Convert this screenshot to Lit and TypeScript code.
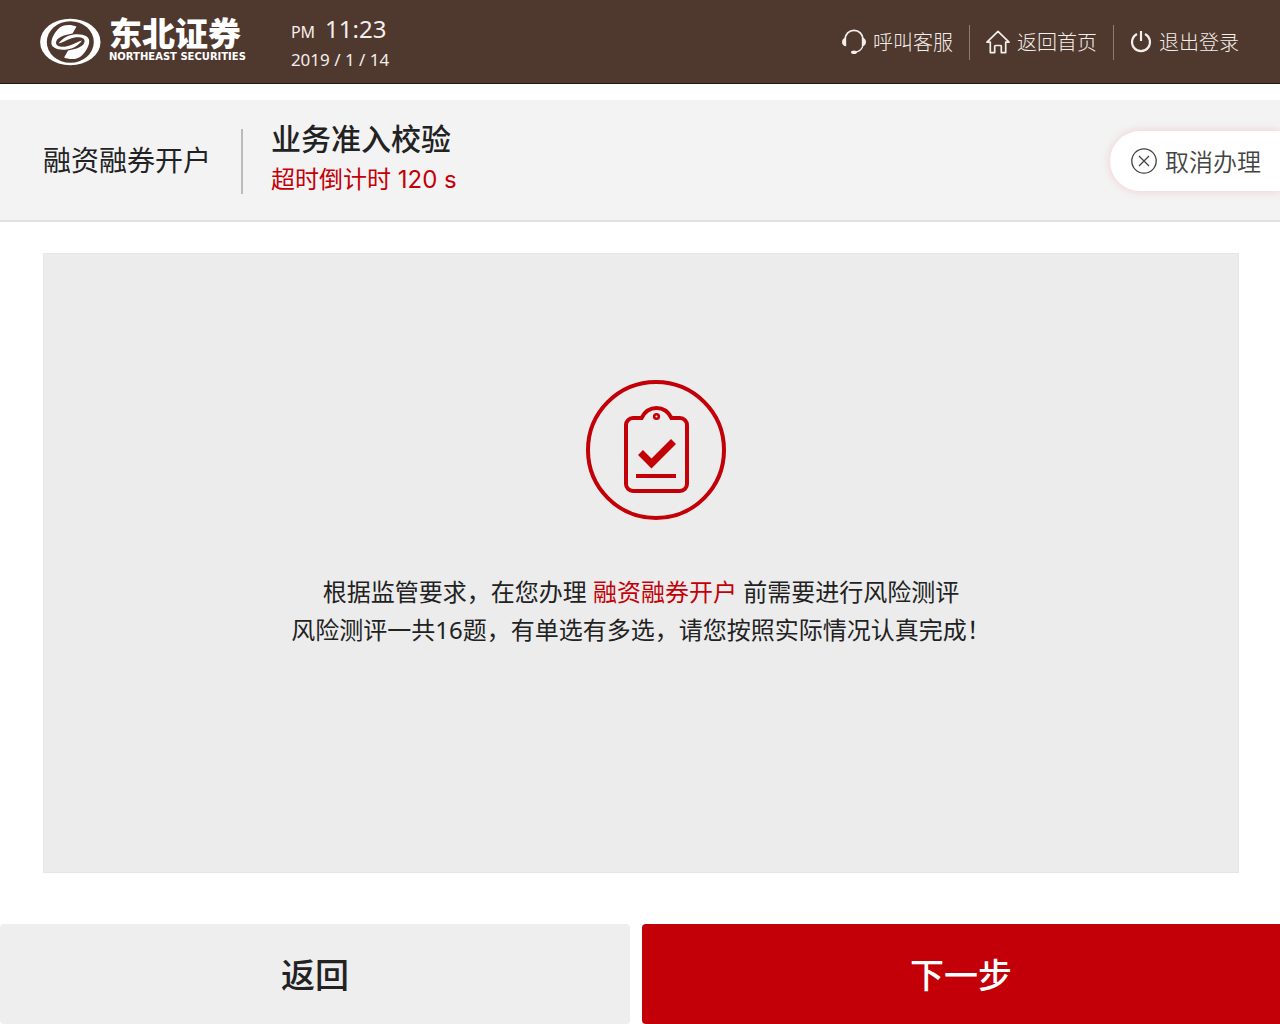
import { LitElement, html, css, svg } from "lit";
import { customElement, state } from "lit/decorators.js";

const headsetIcon = svg`<svg class="icon" width="24" height="26" viewBox="0 0 24 26" fill="none" aria-hidden="true">
  <path d="M2.800 10.500C3.300 5 7 1.300 12 1.300s8.700 3.700 9.200 9.200" stroke="currentColor" stroke-width="1.800" />
  <path d="M4.200 8.800C1.600 8.800 0 10.500 0 13s1.600 4.200 4.200 4.200z" fill="currentColor" />
  <path d="M19.800 8.800c2.600 0 4.200 1.700 4.200 4.200s-1.600 4.200-4.200 4.200z" fill="currentColor" />
  <path d="M21 16.500c-.8 3.200-3 5.500-7 6.600" stroke="currentColor" stroke-width="1.200" />
  <ellipse cx="12" cy="23.300" rx="3" ry="1.800" fill="currentColor" />
</svg>`;

const homeIcon = svg`<svg class="icon" width="24" height="24" viewBox="0 0 24 24" fill="none" stroke="currentColor" stroke-width="1.700" stroke-linejoin="round" aria-hidden="true">
  <path d="M12 1.300 23 12.200h-3.300V22.600h-4.400v-6.300c0-.5-.3-.8-.8-.8h-5c-.5 0-.8.3-.8.8v6.300H4.300V12.200H1z" />
</svg>`;

const powerIcon = svg`<svg class="icon" width="22" height="24" viewBox="0 0 22 24" fill="none" stroke="currentColor" stroke-width="2.200" aria-hidden="true">
  <path d="M7 4a9 9 0 1 0 8 0" />
  <path d="M11 1v10" />
</svg>`;

const closeIcon = svg`<svg class="icon" width="26" height="26" viewBox="0 0 26 26" fill="none" stroke="currentColor" stroke-width="1.300" aria-hidden="true">
  <circle cx="13" cy="13" r="12.200" />
  <path d="M8 8l10 10M18 8 8 18" />
</svg>`;

const hook = "M37.500 8.500 33.500 15.500C24 17 17 20 17 25C17 29 25 30 32 27C36 25.500 40 23 43 22.500C39 28 34 30.500 28 31.500C19 32.500 11 30 12.500 23C14 16 20 8.500 25 7.500C29 6.500 34 7 37.500 8.500Z";

const emblem = svg`<svg class="icon" width="62" height="48" viewBox="0 0 62 48" aria-hidden="true">
  <ellipse cx="31.300" cy="24" rx="30.200" ry="23.200" fill="#fff" />
  <ellipse cx="31.300" cy="24" rx="23.500" ry="20.800" fill="#4f382e" />
  <path d=${hook} fill="#fff" />
  <path d=${hook} fill="#fff" transform="rotate(180 31.300 24)" />
</svg>`;

const clipboardIcon = svg`<svg class="clipboard" width="140" height="140" viewBox="0 0 140 140" fill="none" stroke="#c30008" stroke-width="4" aria-hidden="true">
  <circle cx="70" cy="70" r="68" />
  <path d="M47 38h8.500c3-6 8.500-10 15-10s12 4 15 10H94a7 7 0 0 1 7 7v59a7 7 0 0 1-7 7H47a7 7 0 0 1-7-7V45a7 7 0 0 1 7-7z" />
  <circle cx="70.500" cy="36.500" r="2.300" stroke-width="2.600" />
  <path d="M54.500 72.500 65.500 83.500 87.500 61.500" stroke-width="7" />
  <path d="M50 96h40" />
</svg>`;

@customElement("app-root")
export class AppRoot extends LitElement {
  static styles = css`
    :host {
      display: block;
      font-family: "Noto Sans", "Noto Sans CJK SC", sans-serif;
      color: #222;
      background: #fff;
    }
    * { box-sizing: border-box; }
    h1, h2, p { margin: 0; font-weight: 400; }
    button { font: inherit; border: 0; cursor: pointer; }
    .icon { display: block; flex: none; }
    .page {
      display: flex;
      flex-direction: column;
      min-height: 100vh;
    }
    .top {
      display: flex;
      align-items: center;
      height: 84px;
      padding: 0 41px 0 39px;
      background: #4f382e;
      box-shadow: inset 0 -1px #2c130c;
      color: #fff;
    }
    .brand { display: flex; align-items: center; gap: 8px; }
    .brand-name {
      font: 900 33px/30px "Noto Sans CJK SC", sans-serif;
    }
    .brand-latin {
      font: bold 10px/20px "DejaVu Sans", sans-serif;
    }
    .clock { margin-left: 45px; color: #f4eeea; }
    .time { display: flex; align-items: baseline; gap: 10px; font-size: 24px; line-height: 32px; }
    .meridiem { font-size: 16px; }
    .date { font-size: 17px; line-height: 24px; }
    .nav { display: flex; margin-left: auto; }
    .nav-link {
      display: flex;
      align-items: center;
      gap: 7px;
      height: 35px;
      padding: 0 16px;
      border-left: 1px solid #8d7c74;
      color: #f4eeea;
      font: 300 20px/30px "Noto Sans CJK SC", sans-serif;
      text-decoration: none;
    }
    .nav-link:first-child { border-left: 0; }
    .nav-link:last-child { padding-right: 0; }
    .task {
      display: flex;
      align-items: center;
      margin-top: 16px;
      padding: 2px 0 0 43px;
      height: 122px;
      background: #f3f3f3;
      border-bottom: 2px solid #e0e0e0;
      font-family: Inter, "Noto Sans CJK SC", sans-serif;
    }
    .business {
      font-size: 28px;
      line-height: 65px;
      padding-right: 30px;
      border-right: 2px solid #bbb;
    }
    .step { padding-left: 28px; margin-bottom: 4px; }
    .step-name { font-size: 30px; line-height: 42px; font-weight: 500; }
    .countdown { font-size: 24px; line-height: 40px; color: #c30008; }
    .cancel {
      display: flex;
      align-items: center;
      gap: 8px;
      height: 60px;
      margin-left: auto;
      padding: 0 19px 0 21px;
      border-radius: 30px 0 0 30px;
      background: #fff;
      box-shadow: 0 0 8px rgba(240, 90, 90, 0.25);
      color: #444;
      font: 350 24px/36px "Noto Sans CJK SC", sans-serif;
    }
    .content { display: flex; flex: 1; padding: 31px 41px 51px 43px; }
    .panel {
      display: flex;
      flex: 1;
      flex-direction: column;
      align-items: center;
      justify-content: center;
      gap: 53px;
      padding: 32px 16px 130px;
      background: #ececec;
      border: 1px solid #e6e6e6;
    }
    .clipboard { display: block; margin-left: 30px; }
    .notice { font-size: 24px; line-height: 38px; text-align: center; }
    .highlight { color: #c30008; }
    .actions { display: grid; grid-template-columns: 630fr 638fr; gap: 12px; }
    .action {
      height: 100px;
      border-radius: 4px;
      font: 500 34px/50px "Noto Sans CJK SC", sans-serif;
    }
    .back { background: #eee; color: #222; }
    .next { background: #c30008; color: #fff; border-radius: 4px 0 0 4px; }
  `;

  @state() private business = "融资融券开户";
  @state() private seconds = 120;

  render() {
    return html`
      <div class="page">
        <header class="top">
          <div class="brand">
            ${emblem}
            <div>
              <div class="brand-name">东北证券</div>
              <div class="brand-latin">NORTHEAST SECURITIES</div>
            </div>
          </div>
          <div class="clock">
            <div class="time"><span class="meridiem">PM</span><span>11:23</span></div>
            <div class="date">2019 / 1 / 14</div>
          </div>
          <nav class="nav">
            <a class="nav-link" href="#service">${headsetIcon}<span>呼叫客服</span></a>
            <a class="nav-link" href="#home">${homeIcon}<span>返回首页</span></a>
            <a class="nav-link" href="#logout">${powerIcon}<span>退出登录</span></a>
          </nav>
        </header>
        <section class="task">
          <h1 class="business">${this.business}</h1>
          <div class="step">
            <h2 class="step-name">业务准入校验</h2>
            <p class="countdown">超时倒计时 ${this.seconds} s</p>
          </div>
          <button class="cancel" type="button">${closeIcon}<span>取消办理</span></button>
        </section>
        <main class="content">
          <div class="panel">
            ${clipboardIcon}
            <div class="notice">
              <p>根据监管要求，在您办理 <span class="highlight">${this.business}</span> 前需要进行风险测评</p>
              <p>风险测评一共16题，有单选有多选，请您按照实际情况认真完成！</p>
            </div>
          </div>
        </main>
        <footer class="actions">
          <button class="action back" type="button">返回</button>
          <button class="action next" type="button">下一步</button>
        </footer>
      </div>
    `;
  }
}
